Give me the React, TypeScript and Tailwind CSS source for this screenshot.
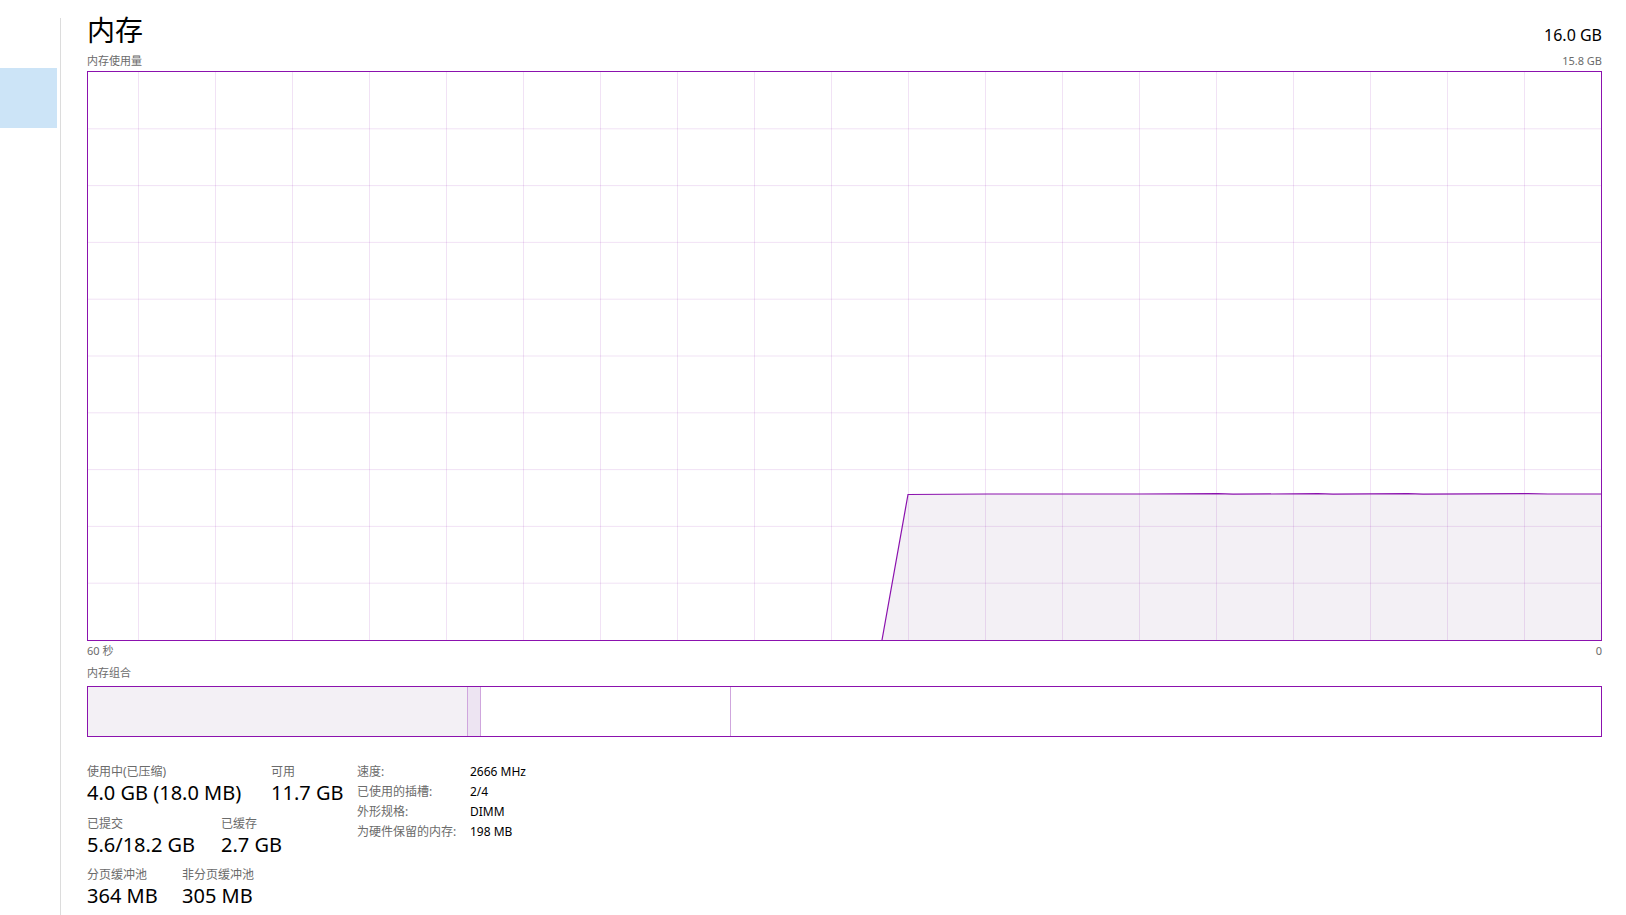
const W = 1513;
const H = 568;

const vLines = Array.from({ length: 19 }, (_, i) => W - 77 * (i + 1));
const hLines = Array.from({ length: 9 }, (_, i) => (H / 10) * (i + 1));

// memory usage history, flat after the jump
const pts: [number, number][] = [
  [794, H],
  [820, 422.5],
  [900, 422],
  [1050, 422],
  [1130, 421.6],
  [1145, 422.2],
  [1230, 421.7],
  [1245, 422.2],
  [1320, 421.7],
  [1335, 422.1],
  [1440, 421.7],
  [1460, 422],
  [W, 422],
];

function UsageChart() {
  const line = pts.map(([x, y]) => `${x},${y}`).join(' ');
  const area = `${line} ${W},${H}`;
  return (
    <svg
      className="block h-full w-full"
      viewBox={`0 0 ${W} ${H}`}
      preserveAspectRatio="none"
    >
      <polygon points={area} fill="#f3f0f5" />
      {vLines.map((x) => (
        <line key={x} x1={x + 0.5} y1={0} x2={x + 0.5} y2={H} stroke="#8b12ae" strokeOpacity={0.12} />
      ))}
      {hLines.map((y) => (
        <line key={y} x1={0} y1={y} x2={W} y2={y} stroke="#8b12ae" strokeOpacity={0.12} />
      ))}
      <polyline points={line} fill="none" stroke="#8b12ae" strokeWidth={1.2} />
    </svg>
  );
}

function Stat({ label, value, w }: { label: string; value: string; w: string }) {
  return (
    <div className={w}>
      <div className="text-[12px] leading-[16px] text-[#6b6b6b]">{label}</div>
      <div className="text-[20px] leading-[26px] text-black">{value}</div>
    </div>
  );
}

export default function App() {
  const props = [
    ['速度:', '2666 MHz'],
    ['已使用的插槽:', '2/4'],
    ['外形规格:', 'DIMM'],
    ['为硬件保留的内存:', '198 MB'],
  ];

  return (
    <div className="flex h-[915px] w-[1626px] overflow-hidden bg-white font-['Noto_Sans','Noto_Sans_CJK_SC',sans-serif]">
      {/* left nav */}
      <div className="w-[57px] shrink-0 pt-[68px]">
        <div className="h-[60px] bg-[#cce4f7]" />
      </div>
      <div className="ml-[3px] mt-[18px] w-px shrink-0 bg-[#dcdcdc]" />

      <div className="flex-1 pl-[26px] pr-[24px] pt-[10px]">
        <div className="flex h-[40px] items-baseline justify-between">
          <div className="text-[28px] leading-[40px] text-black">内存</div>
          <div className="text-[16px] leading-[20px] text-black">16.0 GB</div>
        </div>
        <div className="flex items-baseline justify-between text-[11px] leading-[21px] text-[#6b6b6b]">
          <span>内存使用量</span>
          <span>15.8 GB</span>
        </div>

        <div className="h-[570px] border border-[#8b12ae]">
          <UsageChart />
        </div>

        <div className="flex justify-between text-[11px] leading-[19px] text-[#6b6b6b]">
          <span>60 秒</span>
          <span>0</span>
        </div>
        <div className="text-[11px] leading-[26px] text-[#6b6b6b]">内存组合</div>

        <div className="flex h-[51px] border border-[#8b12ae]">
          <div className="w-[379px] bg-[#f3f0f5]" />
          <div className="w-px bg-[#cfa6dd]" />
          <div className="w-[12px] bg-[#ede4f2]" />
          <div className="w-px bg-[#cfa6dd]" />
          <div className="w-[249px]" />
          <div className="w-px bg-[#cfa6dd]" />
          <div className="flex-1" />
        </div>

        <div className="mt-[27px] flex">
          <div className="flex w-[270px] flex-col gap-[9.5px]">
            <div className="flex">
              <Stat w="w-[184px]" label="使用中(已压缩)" value="4.0 GB (18.0 MB)" />
              <Stat w="" label="可用" value="11.7 GB" />
            </div>
            <div className="flex">
              <Stat w="w-[134px]" label="已提交" value="5.6/18.2 GB" />
              <Stat w="" label="已缓存" value="2.7 GB" />
            </div>
            <div className="flex">
              <Stat w="w-[95px]" label="分页缓冲池" value="364 MB" />
              <Stat w="" label="非分页缓冲池" value="305 MB" />
            </div>
          </div>

          <div className="-mt-[2px] text-[12px] leading-[20px]">
            {props.map(([k, v]) => (
              <div key={k} className="flex">
                <div className="w-[113px] text-[#6b6b6b]">{k}</div>
                <div className="text-black">{v}</div>
              </div>
            ))}
          </div>
        </div>
      </div>
    </div>
  );
}
